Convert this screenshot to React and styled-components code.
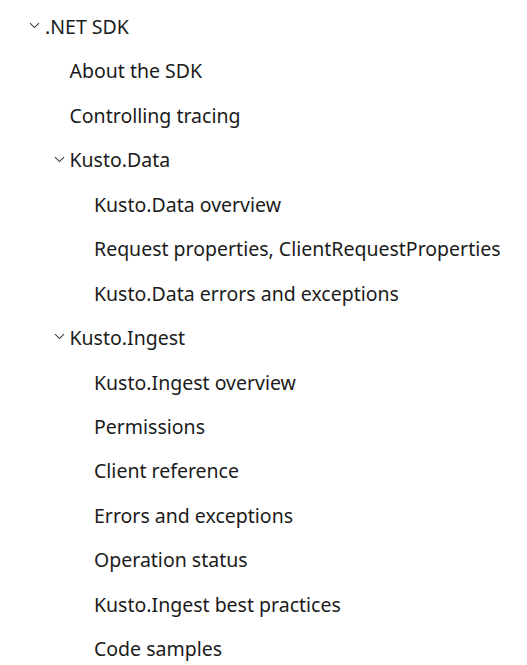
import React from "react";
import styled, { createGlobalStyle } from "styled-components";

const Global = createGlobalStyle`
  html, body { margin: 0; padding: 0; background: #ffffff; }
  body { font-family: "Noto Sans", "Open Sans", sans-serif; color: #1b1b1b; }
`;

const Tree = styled.ul`
  list-style: none;
  margin: 0;
  padding: 5px 0 0 0;
  display: flex;
  flex-direction: column;
`;

const Row = styled.li`
  display: flex;
  align-items: center;
  height: 44.45px;
  padding-left: ${(p) => 29 + p.$level * 24.5}px;
  font-size: 19.5px;
  line-height: 44.45px;
  white-space: nowrap;
  color: #1b1b1b;
`;

const Toggle = styled.span`
  display: flex;
  align-items: center;
  justify-content: flex-start;
  width: 16px;
  height: 100%;
  flex: none;
  color: #3a3a3a;
  margin-top: -3px;
`;

const Label = styled.span`
  display: block;
`;

const Chevron = () => (
  <svg width="11" height="7" viewBox="0 0 11 7" fill="none">
    <polyline points="1,1.2 5.5,5.6 10,1.2" stroke="currentColor" strokeWidth="1.1" />
  </svg>
);

const items = [
  { level: 0, text: ".NET SDK", branch: true },
  { level: 1, text: "About the SDK" },
  { level: 1, text: "Controlling tracing" },
  { level: 1, text: "Kusto.Data", branch: true },
  { level: 2, text: "Kusto.Data overview" },
  { level: 2, text: "Request properties, ClientRequestProperties" },
  { level: 2, text: "Kusto.Data errors and exceptions" },
  { level: 1, text: "Kusto.Ingest", branch: true },
  { level: 2, text: "Kusto.Ingest overview" },
  { level: 2, text: "Permissions" },
  { level: 2, text: "Client reference" },
  { level: 2, text: "Errors and exceptions" },
  { level: 2, text: "Operation status" },
  { level: 2, text: "Kusto.Ingest best practices" },
  { level: 2, text: "Code samples" },
];

export default function App() {
  return (
    <>
      <Global />
      <Tree>
        {items.map((it, i) => (
          <Row key={i} $level={it.level}>
            <Toggle>{it.branch ? <Chevron /> : null}</Toggle>
            <Label>{it.text}</Label>
          </Row>
        ))}
      </Tree>
    </>
  );
}
